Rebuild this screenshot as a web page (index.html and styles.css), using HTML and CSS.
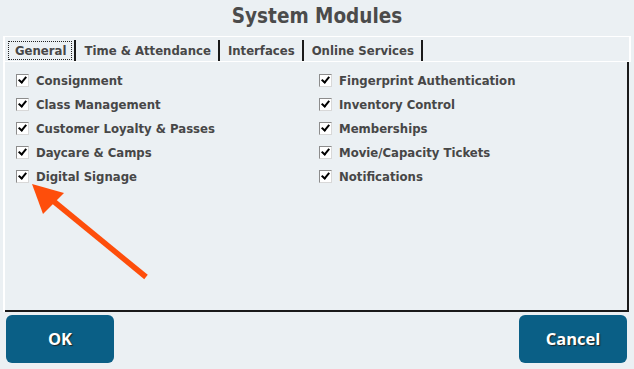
FILE: index.html
```html
<!DOCTYPE html>
<html lang="en">
<head>
  <meta charset="UTF-8">
  <title>System Modules</title>
  <link rel="stylesheet" href="styles.css">
</head>
<body>

  <div id="dialog">

    <h1 class="title">System Modules</h1>

    <div class="tabFrame">
      <div class="tabStrip">
        <div class="tab active"><span class="focus">General</span></div>
        <div class="tab">Time &amp; Attendance</div>
        <div class="tab">Interfaces</div>
        <div class="tab">Online Services</div>
      </div>

      <div class="panel">
        <div class="column">
          <label class="option"><span class="check"></span>Consignment</label>
          <label class="option"><span class="check"></span>Class Management</label>
          <label class="option"><span class="check"></span>Customer Loyalty &amp; Passes</label>
          <label class="option"><span class="check"></span>Daycare &amp; Camps</label>
          <label class="option"><span class="check"></span>Digital Signage</label>
        </div>
        <div class="column">
          <label class="option"><span class="check"></span>Fingerprint Authentication</label>
          <label class="option"><span class="check"></span>Inventory Control</label>
          <label class="option"><span class="check"></span>Memberships</label>
          <label class="option"><span class="check"></span>Movie/Capacity Tickets</label>
          <label class="option"><span class="check"></span>Notifications</label>
        </div>
      </div>
    </div>

    <div class="buttonRow">
      <button class="dlgButton">OK</button>
      <button class="dlgButton">Cancel</button>
    </div>

    <!-- annotation arrow pointing at Digital Signage -->
    <svg class="arrow" width="634" height="369" viewBox="0 0 634 369">
      <line x1="146" y1="277" x2="46" y2="195" stroke="#fe4e0b" stroke-width="5.5"/>
      <polygon points="32,184 64,193 43,214" fill="#fe4e0b"/>
    </svg>

  </div>

</body>
</html>
```

FILE: styles.css
```css
body {
  margin: 0;
  background-color: #ebf0f3;
  font-family: 'DejaVu Sans Condensed', 'DejaVu Sans', sans-serif;
  font-weight: bold;
  color: #474747;
}

#dialog {
  position: relative;
  width: 634px;
  height: 369px;
  overflow: hidden;
}

.title {
  margin: 0;
  height: 36px;
  line-height: 33px;
  font-size: 20.5px;
  text-align: center;
  color: #4b4b4b;
}

.tabFrame {
  margin: 0 3px 0 3px;
  border-left: 2px solid #fff;
}

.tabStrip {
  display: flex;
  height: 24px;
  border-top: 1px solid #fff;
  border-right: 2px solid #fff;
  border-bottom: 1px solid #fff;
  font-size: 13px;
}

.tab {
  display: flex;
  align-items: center;
  padding: 0 7px 0 8px;
  border-right: 2px solid #1a1a1a;
  margin: 3px 0 0 0;
}

.tab.active {
  padding: 0 2px 0 3px;
}

.focus {
  border: 1px dotted #222;
  padding: 1px 5px 1px 6px;
}

.panel {
  display: flex;
  height: 250px;
  margin-right: 2px;
  border-right: 2px solid #1a1a1a;
  border-bottom: 2px solid #1a1a1a;
  padding: 6px 0 0 11px;
  box-sizing: border-box;
}

.column {
  width: 303px;
  display: flex;
  flex-direction: column;
}

.option {
  display: flex;
  align-items: center;
  height: 24px;
  font-size: 13px;
}

.check {
  position: relative;
  width: 11px;
  height: 11px;
  margin-right: 7px;
  background-color: #fff;
  border: 1px solid #8c8c8c;
  border-right-color: #d8d8d8;
  border-bottom-color: #d8d8d8;
}

.check::after {
  content: '';
  position: absolute;
  left: 3px;
  top: 0;
  width: 3px;
  height: 6px;
  border-right: 2.5px solid #000;
  border-bottom: 2.5px solid #000;
  transform: rotate(40deg);
}

.buttonRow {
  display: flex;
  justify-content: space-between;
  padding: 3px 7px 0 6px;
}

.dlgButton {
  width: 108px;
  height: 48px;
  background-color: #0a5f86;
  color: #fff;
  border: none;
  border-radius: 6px;
  font-family: 'Open Sans', sans-serif;
  font-weight: bold;
  font-size: 16.5px;
  padding: 0 0 2px 0;
  text-shadow: 1px 1px 1px #222;
}

.arrow {
  position: absolute;
  left: 0;
  top: 0;
  pointer-events: none;
}
```
